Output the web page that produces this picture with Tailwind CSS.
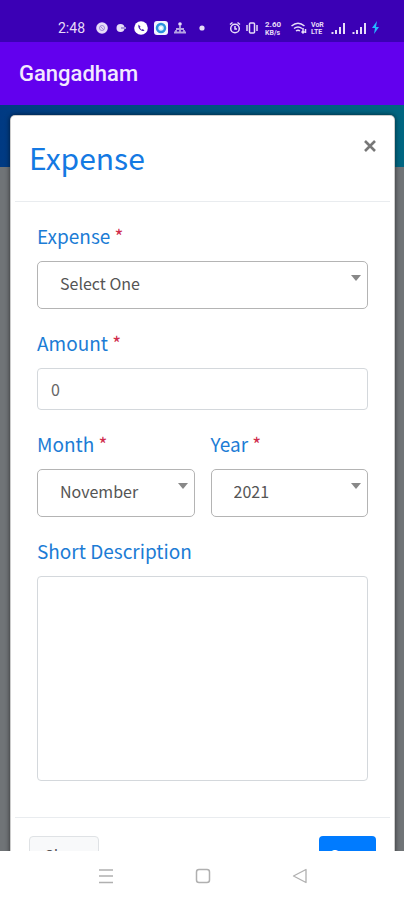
<!DOCTYPE html>
<html lang="en">
<head>
<meta charset="utf-8">
<meta name="viewport" content="width=device-width, initial-scale=1">
<title>Gangadham</title>
<script src="https://cdn.jsdelivr.net/npm/@tailwindcss/browser@4"></script>
</head>
<body class="flex h-screen flex-col overflow-hidden bg-white font-['Noto_Sans_CJK_SC',sans-serif] font-normal">

<!-- Status bar -->
<div class="flex h-[42px] shrink-0 items-center justify-between bg-[#3b00b5] pt-[14px] pr-6 pl-[58px] font-[Roboto,sans-serif] text-[#e6dcf8]">
  <div class="flex items-center">
    <span class="w-[38px] text-sm leading-4">2:48</span>
    <svg class="h-4 w-28" viewBox="0 0 112 16" fill="none" stroke="currentColor" aria-hidden="true">
      <circle cx="6" cy="8" r="5.800" fill="currentColor" stroke="none"/>
      <circle cx="6" cy="8" r="2.500" stroke="#a48cdc"/><path d="M4 6l4 4" stroke="#a48cdc"/>
      <circle cx="24.500" cy="8" r="4" fill="currentColor" stroke="none"/><path d="M25 8h5" stroke="#a690dc" stroke-width="2"/>
      <circle cx="45" cy="8" r="6.800" fill="#fff" stroke="none"/>
      <path d="M42.500 4.500c-1 3.500 2 7 6 6.500l-1.500-2-1.500.7-1.700-2 .7-1z" fill="#4a20b0" stroke="none"/>
      <rect x="58" y="1" width="14" height="14" rx="3" fill="#f4f5ff" stroke="none"/>
      <circle cx="65" cy="8" r="4" fill="#d6f0ff" stroke="#2c91df" stroke-width="2.500"/><circle cx="65" cy="8" r="1.200" fill="#fff" stroke="none"/>
      <circle cx="84" cy="4" r="1.800" fill="currentColor" stroke="none"/>
      <path d="M84 5v4M80 9h8M78 12.500h12M80 10v3M84 9v4M88 10v3" stroke="#b6a3e3" stroke-width="1.800"/>
      <circle cx="106" cy="8" r="2.600" fill="currentColor" stroke="none"/>
    </svg>
  </div>
  <svg class="h-4 w-[151px]" viewBox="0 0 151 16" fill="none" stroke="currentColor" stroke-width="1.500" aria-hidden="true">
    <circle cx="6" cy="8.500" r="4.300"/><path d="M6 6v3h2M1 4.500L3.500 2.500M8.500 2.500L11 4.500"/>
    <rect x="20.500" y="3" width="5" height="10" rx="1"/><path d="M18 5v6M28 5v6"/>
    <g fill="currentColor" stroke="none" font-family="Roboto" font-weight="700"><text x="36" y="7" font-size="8">2.60</text><text x="36" y="15" font-size="7">KB/s</text></g>
    <path d="M62.500 6c4-3.500 9-3.500 13 0M65 8.500c2.500-2 5.500-2 8 0M67 11c1.500-1 2.500-1 4 0M74 8v5M72.500 11.500L74 13l1.500-1.500M76.500 13V9"/>
    <g fill="currentColor" stroke="none" font-family="Roboto" font-weight="700"><text x="82" y="7" font-size="7">VoR</text><text x="82" y="14" font-size="7">LTE</text></g>
    <path d="M103.500 14v-2M107 14v-4M111 14V7M115 14V3M124.500 14v-2M128 14v-4M132 14V7M136 14V3" stroke-width="2"/>
    <path d="M148 1l-5 7h3l-1 6 5-7h-3z" fill="#24b8ff" stroke="none"/>
  </svg>
</div>

<!-- App bar -->
<header class="flex h-[63px] shrink-0 items-center bg-[#6200ee] px-[19px]">
  <h1 class="font-[Roboto,sans-serif] text-[22px] leading-8 font-medium text-[#f3e9ff]">Gangadham</h1>
</header>

<!-- Dimmed page with the dialog over it -->
<main class="min-h-0 flex-1 overflow-hidden bg-linear-to-r from-[#003a83] via-[#005280] to-[#006681] bg-[length:100%_62px] bg-no-repeat bg-[#707477] pt-[10px] pr-[9px] pl-[10px]">
  <section role="dialog" aria-labelledby="title" class="rounded-[5px] border border-black/20 bg-white shadow-[0_0_5px_rgba(0,0,0,0.6)]">
    <div class="mx-1 flex items-start justify-between border-b border-[#e9ecef] pt-5 pr-[10px] pb-[22px] pl-[14px]">
      <h2 id="title" class="text-[30px] leading-[43px] text-[#1479e3]">Expense</h2>
      <button type="button" aria-label="Close dialog" class="flex size-5 items-center justify-center text-[#777]">
        <svg class="size-3" viewBox="0 0 12 12" fill="none" stroke="currentColor" stroke-width="2.600"><path d="M1 1l10 10M11 1L1 11"/></svg>
      </button>
    </div>

    <form class="px-[26px] pt-5 pb-9 text-[19px]">
      <label for="expense" class="block leading-7 text-[#1c7cd5]">Expense <span class="text-[#d02c4c]">*</span></label>
      <div class="relative mt-[11px]">
        <select id="expense" class="block h-12 w-full appearance-none rounded-[5px] border border-[#b4b4b4] bg-white px-[22px] pb-1 text-base text-[#555]"><option>Select One</option></select>
        <svg class="pointer-events-none absolute top-[14px] right-[7px] h-[6px] w-[10px]" viewBox="0 0 10 6" aria-hidden="true"><path d="M0 0h10L5 6z" fill="#888"/></svg>
      </div>

      <label for="amount" class="mt-5 block leading-7 text-[#1c7cd5]">Amount <span class="text-[#d02c4c]">*</span></label>
      <input id="amount" type="text" inputmode="numeric" value="0" class="mt-[11px] block h-[42px] w-full rounded-[4px] border border-[#d4d8dc] bg-white px-[13px] text-base text-[#666]">

      <div class="mt-5 grid grid-cols-2 gap-4">
        <div>
          <label for="month" class="block leading-7 text-[#1c7cd5]">Month <span class="text-[#d02c4c]">*</span></label>
          <div class="relative mt-[11px]">
            <select id="month" class="block h-12 w-full appearance-none rounded-[5px] border border-[#b4b4b4] bg-white px-[22px] pb-1 text-base text-[#555]"><option>November</option></select>
            <svg class="pointer-events-none absolute top-[14px] right-[7px] h-[6px] w-[10px]" viewBox="0 0 10 6" aria-hidden="true"><path d="M0 0h10L5 6z" fill="#888"/></svg>
          </div>
        </div>
        <div>
          <label for="year" class="block leading-7 text-[#1c7cd5]">Year <span class="text-[#d02c4c]">*</span></label>
          <div class="relative mt-[11px]">
            <select id="year" class="block h-12 w-full appearance-none rounded-[5px] border border-[#b4b4b4] bg-white px-[22px] pb-1 text-base text-[#555]"><option>2021</option></select>
            <svg class="pointer-events-none absolute top-[14px] right-[7px] h-[6px] w-[10px]" viewBox="0 0 10 6" aria-hidden="true"><path d="M0 0h10L5 6z" fill="#888"/></svg>
          </div>
        </div>
      </div>

      <label for="description" class="mt-5 block leading-7 text-[#1c7cd5]">Short Description</label>
      <textarea id="description" class="mt-[11px] block h-[205px] w-full resize-none rounded-[4px] border border-[#d4d8dc] bg-white p-3 text-base text-[#666]"></textarea>
    </form>

    <div class="mx-1 flex justify-between border-t border-[#e9ecef] px-[14px] py-[18px] text-base">
      <button type="button" class="h-[38px] w-[70px] rounded-[4px] border border-[#dfe2e5] bg-[#f8f9fa] text-[#555]">Close</button>
      <button type="button" class="h-[38px] w-[57px] rounded-[4px] bg-[#007bff] text-white">Save</button>
    </div>
  </section>
</main>

<!-- System navigation -->
<nav aria-label="System" class="flex h-[49px] shrink-0 items-center justify-center gap-[77px] bg-white pl-[2px] text-[#b0b0b0]">
  <button type="button" aria-label="Recent apps" class="size-5"><svg class="size-5" viewBox="0 0 20 20" fill="none" stroke="currentColor" stroke-width="1.500"><path d="M3 4h14M3 10h14M3 16.500h14"/></svg></button>
  <button type="button" aria-label="Home" class="size-5"><svg class="size-5" viewBox="0 0 20 20" fill="none" stroke="currentColor" stroke-width="1.500"><rect x="3.500" y="3.500" width="13" height="13" rx="2.500"/></svg></button>
  <button type="button" aria-label="Back" class="size-5"><svg class="size-5" viewBox="0 0 20 20" fill="none" stroke="currentColor" stroke-width="1.300" stroke-linejoin="round"><path d="M3.500 10L16 3.500v13z"/></svg></button>
</nav>
</body>
</html>
